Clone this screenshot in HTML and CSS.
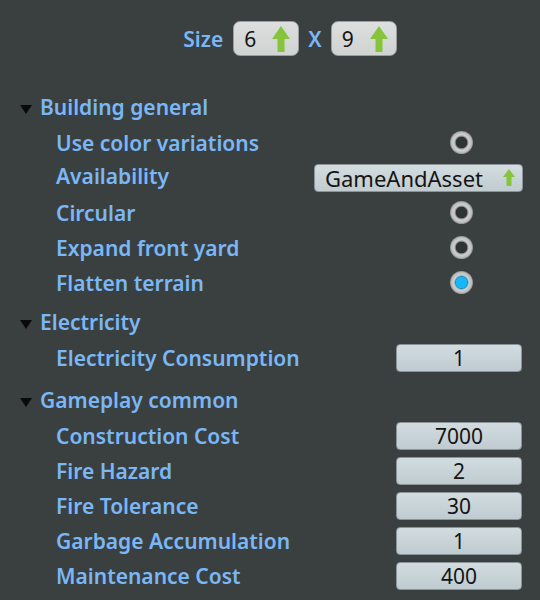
FILE: index.html
```html
<!DOCTYPE html>
<html>
<head>
<meta charset="utf-8">
<link rel="stylesheet" href="styles.css">
</head>
<body>
<div class="panel">
  <div class="size-row">
    <span class="size-label">Size</span>
    <div class="spin"><span class="spin-val">6</span><svg class="arrow" width="18" height="26" viewBox="0 0 18 26"><path d="M9 0 L18 13 L12.5 13 L12.5 26 L5.5 26 L5.5 13 L0 13 Z" fill="#86c43c"/></svg></div>
    <span class="size-x">X</span>
    <div class="spin"><span class="spin-val">9</span><svg class="arrow" width="18" height="26" viewBox="0 0 18 26"><path d="M9 0 L18 13 L12.5 13 L12.5 26 L5.5 26 L5.5 13 L0 13 Z" fill="#86c43c"/></svg></div>
  </div>

  <div class="section">
    <div class="header"><span class="tri"></span>Building general</div>
    <div class="row"><span class="label">Use color variations</span><div class="ctl"><span class="radio"></span></div></div>
    <div class="row row-avail"><span class="label">Availability</span><div class="ctl wide"><div class="dropdown"><span>GameAndAsset</span><svg width="12" height="17" viewBox="0 0 12 17"><path d="M6 0 L12 8 L8.5 8 L8.5 17 L3.5 17 L3.5 8 L0 8 Z" fill="#86c43c"/></svg></div></div></div>
    <div class="row"><span class="label">Circular</span><div class="ctl"><span class="radio"></span></div></div>
    <div class="row"><span class="label">Expand front yard</span><div class="ctl"><span class="radio"></span></div></div>
    <div class="row"><span class="label">Flatten terrain</span><div class="ctl"><span class="radio on"></span></div></div>
  </div>

  <div class="section s2">
    <div class="header"><span class="tri"></span>Electricity</div>
    <div class="row"><span class="label">Electricity Consumption</span><div class="ctl"><div class="field">1</div></div></div>
  </div>

  <div class="section s3">
    <div class="header"><span class="tri"></span>Gameplay common</div>
    <div class="row"><span class="label">Construction Cost</span><div class="ctl"><div class="field">7000</div></div></div>
    <div class="row"><span class="label">Fire Hazard</span><div class="ctl"><div class="field">2</div></div></div>
    <div class="row"><span class="label">Fire Tolerance</span><div class="ctl"><div class="field">30</div></div></div>
    <div class="row"><span class="label">Garbage Accumulation</span><div class="ctl"><div class="field">1</div></div></div>
    <div class="row"><span class="label">Maintenance Cost</span><div class="ctl"><div class="field">400</div></div></div>
  </div>
</div>
</body>
</html>
```

FILE: styles.css
```css
html, body {
  margin: 0;
  padding: 0;
  background: #3a4040;
}
body {
  width: 540px;
  height: 600px;
  overflow: hidden;
  font-family: "Noto Sans", "Open Sans", sans-serif;
}
.panel {
  padding: 21px 18px 0 20px;
}
.size-row {
  display: flex;
  align-items: center;
  justify-content: center;
  height: 35px;
  padding-left: 38px;
}
.size-label {
  color: #7ab7f6;
  font-weight: 600;
  font-size: 21px;
  margin-right: 10px;
}
.size-x {
  color: #7ab7f6;
  font-weight: 600;
  font-size: 21px;
  margin: 0 9px;
}
.spin {
  width: 66px;
  height: 35px;
  box-sizing: border-box;
  border: 1px solid #9a9e9e;
  border-radius: 7px;
  background: linear-gradient(#dcdfde, #cfd3d2);
  display: flex;
  align-items: center;
  justify-content: space-between;
  padding: 0 8px 0 10px;
}
.spin-val {
  font-size: 21px;
  color: #141414;
}
.section {
  margin-top: 33px;
}
.section.s2 {
  margin-top: 4px;
}
.section.s3 {
  margin-top: 7px;
}
.header {
  height: 36px;
  display: flex;
  align-items: center;
  color: #7ab7f6;
  font-weight: 600;
  font-size: 21px;
}
.tri {
  width: 0;
  height: 0;
  border-left: 6.5px solid transparent;
  border-right: 6.5px solid transparent;
  border-top: 9px solid #0a0a0a;
  margin-right: 8px;
  margin-top: 4px;
}
.row {
  height: 35px;
  display: flex;
  align-items: center;
  justify-content: space-between;
  padding-left: 36px;
}
.row-avail .label {
  margin-top: -3px;
}
.label {
  color: #7ab7f6;
  font-weight: 600;
  font-size: 21px;
}
.ctl {
  width: 126px;
  display: flex;
  justify-content: center;
}
.ctl.wide {
  width: 209px;
  justify-content: flex-end;
  margin-right: -1px;
}
.radio {
  width: 23px;
  height: 23px;
  box-sizing: border-box;
  border-radius: 50%;
  padding: 6px;
  background: radial-gradient(circle, #2e3333 0 5.5px, #7a7e7e 6px, #d0d0d0 7.5px, #bdbdbd 10px, #8a8e8e 11.5px);
  margin-left: 4px;
}
.radio.on {
  background: radial-gradient(circle, #18b6f4 0 5.5px, #1a90c0 6px, #d0d0d0 7.5px, #bdbdbd 10px, #8a8e8e 11.5px);
}
.dropdown {
  width: 209px;
  height: 28px;
  box-sizing: border-box;
  border: 1px solid #8a9599;
  border-radius: 4px;
  background: linear-gradient(#d4dde0, #c0ccd0);
  display: flex;
  align-items: center;
  justify-content: space-between;
  padding: 0 7px 0 10px;
  font-size: 22px;
  color: #141414;
}
.field {
  width: 126px;
  height: 28px;
  box-sizing: border-box;
  border: 1px solid #8a9599;
  border-radius: 4px;
  background: linear-gradient(#d2dce0, #bfcbd0);
  display: flex;
  align-items: center;
  justify-content: center;
  font-size: 21px;
  color: #141414;
}
```
